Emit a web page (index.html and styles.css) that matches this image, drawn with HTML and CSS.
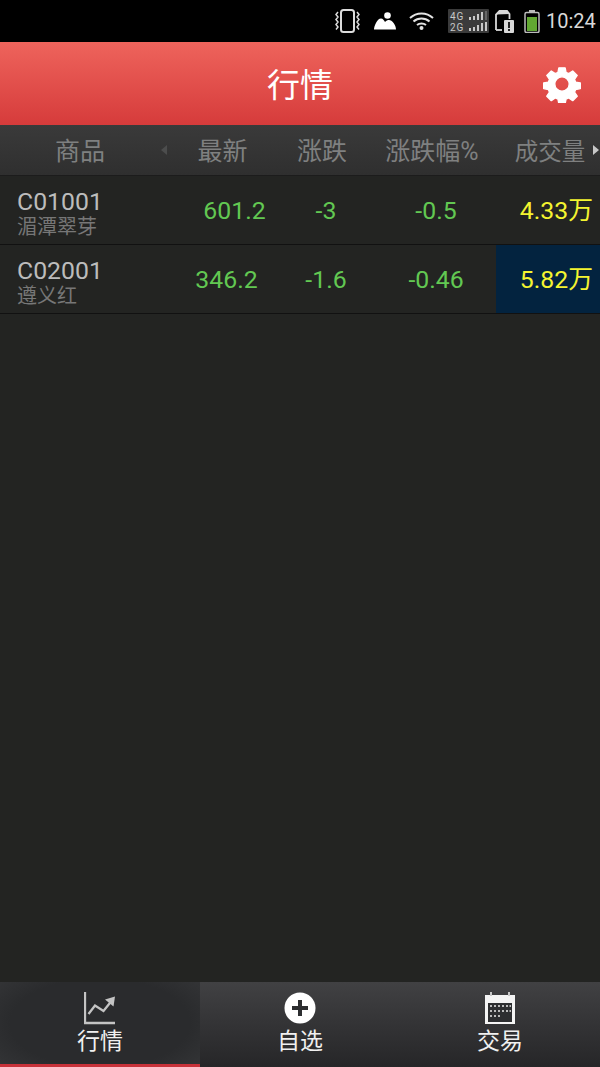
FILE: index.html
```html
<!DOCTYPE html>
<html>
<head lang="zh">
    <meta charset="UTF-8">
    <link rel="stylesheet" href="styles.css">
    <title>行情</title>
</head>
<body>
<div id="screen">
    <div class="statusBar">
        <svg class="icon iconVibrate" width="25" height="24" viewBox="0 0 25 24">
            <rect x="6" y="1" width="13" height="22" rx="2.500" fill="none" stroke="#dcdcdc" stroke-width="2"/>
            <path d="M3 3L1 5.500 3 8 1 10.500 3 13 1 15.500 3 18 1 20.500M22 3l2 2.500-2 2.500 2 2.500-2 2.500 2 2.500-2 2.500 2 2.500" fill="none" stroke="#dcdcdc" stroke-width="1.500"/>
        </svg>
        <svg class="icon iconPicture" width="22" height="18" viewBox="0 0 22 18">
            <circle cx="13.500" cy="3.500" r="3.300" fill="#fff"/>
            <path d="M0 17.500c0-3 3-11 7-11 2 0 3 2 4 3.500 1.500-1.500 2.500-2 4-2 3 0 7 5 7 9.500z" fill="#fff"/>
        </svg>
        <svg class="icon iconWifi" width="25" height="18" viewBox="0 0 25 18">
            <path d="M1 6c6.500-6 16.500-6 23 0M4.500 9.500c4.500-4 11.500-4 16 0M8 13c2.500-2 6.500-2 9 0" fill="none" stroke="#e4e4e4" stroke-width="2"/>
            <circle cx="12.500" cy="16" r="2" fill="#e4e4e4"/>
        </svg>
        <svg class="icon iconSignal" width="41" height="24" viewBox="0 0 41 24">
            <rect width="41" height="24" rx="1" fill="#3b3b3b"/>
            <text class="signalText" x="2" y="10.500">4G</text>
            <text class="signalText" x="2" y="21.500">2G</text>
            <path d="M21 8h2v3h-2zM25 7h2v4h-2zM29 5h2v6h-2zM33 3h2v8h-2z" fill="#c8c8c8"/>
            <path d="M37 2h2v9h-2z" fill="#666"/>
            <path d="M21 19h2v3h-2zM25 18h2v4h-2zM29 16h2v6h-2zM33 14h2v8h-2zM37 13h2v9h-2z" fill="#c8c8c8"/>
        </svg>
        <svg class="icon iconSim" width="20" height="23" viewBox="0 0 20 23">
            <path d="M1 20V4.500L4.500 1H12l2.500 3v5" fill="none" stroke="#d8d8d8" stroke-width="1.800"/>
            <path d="M1 4.500L4.500 1H12l2.500 3z" fill="#d8d8d8"/>
            <path d="M1 20h6" stroke="#d8d8d8" stroke-width="1.800"/>
            <rect x="9" y="10" width="10" height="13" rx="1" fill="#d8d8d8"/>
            <path d="M13 12h2v6h-2zM13 19h2v2h-2z" fill="#222"/>
        </svg>
        <svg class="icon iconBattery" width="16" height="23" viewBox="0 0 16 23">
            <path d="M5 0h6v2H5z" fill="#bbb"/>
            <rect x="1" y="2.500" width="14" height="20" rx="1.500" fill="none" stroke="#bbb" stroke-width="1.500"/>
            <rect x="3" y="7" width="10" height="14" fill="#62a832"/>
        </svg>
        <span class="clock">10:24</span>
    </div>

    <div class="titleBar">
        <h1>行情</h1>
        <svg class="gear" width="38" height="38" viewBox="0 0 38 38">
            <path fill="#fff" stroke="#fff" stroke-width="1.500" stroke-linejoin="round" fill-rule="evenodd" d="M15.500 1h7l1 5.200 3 1.300 4.400-3 5 5-3 4.400 1.300 3 5.200 1v6.200l-5.200 1-1.300 3 3 4.400-5 5-4.400-3-3 1.300-1 5.200h-7l-1-5.200-3-1.300-4.400 3-5-5 3-4.400-1.300-3-5.200-1v-6.200l5.200-1 1.300-3-3-4.400 5-5 4.400 3 3-1.300zM19 11a8 8 0 1 0 0 16 8 8 0 0 0 0-16z" transform="translate(1.900 1.900) scale(.9)"/>
        </svg>
    </div>

    <div class="quoteHead">
        <span class="headName">商品</span>
        <span class="headCell">最新</span>
        <span class="headCell">涨跌</span>
        <span class="headCell">涨跌幅%</span>
        <span class="headCell headLast">成交量</span>
        <i class="arrowLeft"></i>
        <i class="arrowRight"></i>
    </div>

    <div class="quoteRow">
        <div class="nameCell">
            <div class="code">C01001</div>
            <div class="name">湄潭翠芽</div>
        </div>
        <div class="cell down shifted">601.2</div>
        <div class="cell down">-3</div>
        <div class="cell down">-0.5</div>
        <div class="cell volume">4.33万</div>
    </div>
    <div class="quoteRow">
        <div class="nameCell">
            <div class="code">C02001</div>
            <div class="name">遵义红</div>
        </div>
        <div class="cell down">346.2</div>
        <div class="cell down">-1.6</div>
        <div class="cell down">-0.46</div>
        <div class="cell volume flash">5.82万</div>
    </div>

    <div class="spacer"></div>

    <div class="tabBar">
        <div class="tab active">
            <svg width="32" height="33" viewBox="0 0 32 33">
                <path d="M1 0v31h30" fill="none" stroke="#c4c4c4" stroke-width="2.300"/>
                <path d="M4.500 22L11 13.500l8.500 5.500 8-10" fill="none" stroke="#c4c4c4" stroke-width="2.300"/>
                <path d="M21 7.500l10-3-1.500 10z" fill="#c4c4c4"/>
            </svg>
            <span>行情</span>
        </div>
        <div class="tab">
            <svg width="32" height="33" viewBox="0 0 32 33">
                <circle cx="16" cy="16" r="15.500" fill="#fff"/>
                <path d="M14 8h4v6h6v4h-6v6h-4v-6H8v-4h6z" fill="#2d2e30"/>
            </svg>
            <span>自选</span>
        </div>
        <div class="tab">
            <svg width="32" height="33" viewBox="0 0 32 33">
                <path d="M1 3h30v29H1z" fill="#f4f4f4"/>
                <path d="M6 0h2v4H6zM24 0h2v4h-2z" fill="#c8c8c8"/>
                <rect x="4" y="11" width="24" height="19" fill="#2d2e30"/>
                <path d="M6 13h2v2H6zM10 13h2v2h-2zM14 13h2v2h-2zM18 13h2v2h-2zM22 13h2v2h-2zM25.500 13h1.500v2h-1.500zM6 18h2v2H6zM10 18h2v2h-2zM14 18h2v2h-2zM18 18h2v2h-2zM22 18h2v2h-2zM25.500 18h1.500v2h-1.500zM6 23h2v2H6zM10 23h2v2h-2zM14 23h2v2h-2z" fill="#bbb"/>
            </svg>
            <span>交易</span>
        </div>
    </div>
</div>
</body>
</html>
```

FILE: styles.css
```css
html, body {
    margin: 0;
    padding: 0;
    background: #232422;
}
body {
    font-family: Roboto, "Noto Sans CJK SC", sans-serif;
}
#screen {
    width: 600px;
    height: 1067px;
    display: flex;
    flex-direction: column;
    overflow: hidden;
}

/* status bar */
.statusBar {
    height: 42px;
    flex: none;
    box-sizing: border-box;
    background: #000;
    display: flex;
    align-items: center;
    justify-content: flex-end;
    padding-right: 6px;
}
.icon {
    flex: none;
    display: block;
}
.iconVibrate { margin-right: 14px; }
.iconPicture { margin-right: 13px; }
.iconWifi { margin-right: 14px; }
.iconSignal { margin-right: 6px; }
.iconSim { margin-right: 9px; }
.iconBattery { margin-right: 6px; }
.signalText {
    font-family: Roboto, sans-serif;
    font-size: 10px;
    letter-spacing: 1px;
    fill: #c8c8c8;
}
.clock {
    font-size: 20px;
    line-height: 24px;
    color: #d8d8d8;
    width: 48px;
}

/* title */
.titleBar {
    height: 83px;
    flex: none;
    box-sizing: border-box;
    padding-top: 4px;
    position: relative;
    display: flex;
    align-items: center;
    justify-content: center;
    background: linear-gradient(#ee645c, #d63b3b);
}
h1 {
    margin: 0;
    font-size: 33px;
    line-height: 40px;
    font-weight: 400;
    color: #fff;
}
.gear {
    position: absolute;
    right: 19px;
    top: 23px;
}

/* table */
.quoteHead, .quoteRow {
    display: grid;
    grid-template-columns: 177px 99px 100px 120px 104px;
    align-items: center;
    flex: none;
}
.quoteHead {
    height: 51px;
    padding-top: 4px;
    position: relative;
    background: linear-gradient(#3a3a3a, #2f2f2f);
    border-bottom: 1px solid #1c1c1c;
    box-sizing: border-box;
    color: #7f8080;
    font-size: 25px;
    line-height: 30px;
}
.headName {
    text-align: center;
    padding-right: 17px;
}
.headCell {
    text-align: center;
    padding-right: 8px;
    white-space: nowrap;
}
.headLast {
    padding-right: 0;
    font-size: 23.500px;
    margin-left: 4px;
}
.arrowLeft, .arrowRight {
    position: absolute;
    top: 20px;
    width: 0;
    height: 0;
    border-top: 5px solid transparent;
    border-bottom: 5px solid transparent;
}
.arrowLeft {
    left: 161px;
    border-right: 6px solid #4c4d4d;
}
.arrowRight {
    right: 1px;
    border-left: 6px solid #c8c8c8;
}
.quoteRow {
    height: 69px;
    box-sizing: border-box;
    border-bottom: 1px solid #111;
}
.nameCell {
    padding-left: 17px;
    padding-top: 6px;
}
.code {
    font-size: 24.800px;
    line-height: 26px;
    color: #bcbcbc;
}
.name {
    font-size: 20px;
    line-height: 22px;
    margin-top: 1px;
    color: #777;
}
.cell {
    font-size: 24.800px;
    line-height: 30px;
    text-align: center;
    height: 100%;
    box-sizing: border-box;
    padding-top: 2px;
    display: flex;
    align-items: center;
    justify-content: center;
}
.down {
    color: #62c852;
}
.shifted {
    padding-left: 16px;
}
.volume {
    color: #f4f430;
    justify-content: flex-end;
    padding-right: 7px;
}
.flash {
    background: #03233f;
}

.spacer {
    flex: 1;
}

/* bottom tabs */
.tabBar {
    height: 85px;
    flex: none;
    display: flex;
    background: linear-gradient(#414143, #262628);
}
.tab {
    flex: 1;
    box-sizing: border-box;
    display: flex;
    flex-direction: column;
    align-items: center;
    padding-top: 10px;
    color: #f0f0f0;
    font-size: 23px;
    line-height: 30px;
}
.tab svg {
    display: block;
}
.tab span {
    margin-top: 2px;
}
.tab.active {
    background: radial-gradient(ellipse 75% 90% at center, #2a2b2d 60%, #37383a 100%);
    border-bottom: 3px solid #c8323a;
}
```
